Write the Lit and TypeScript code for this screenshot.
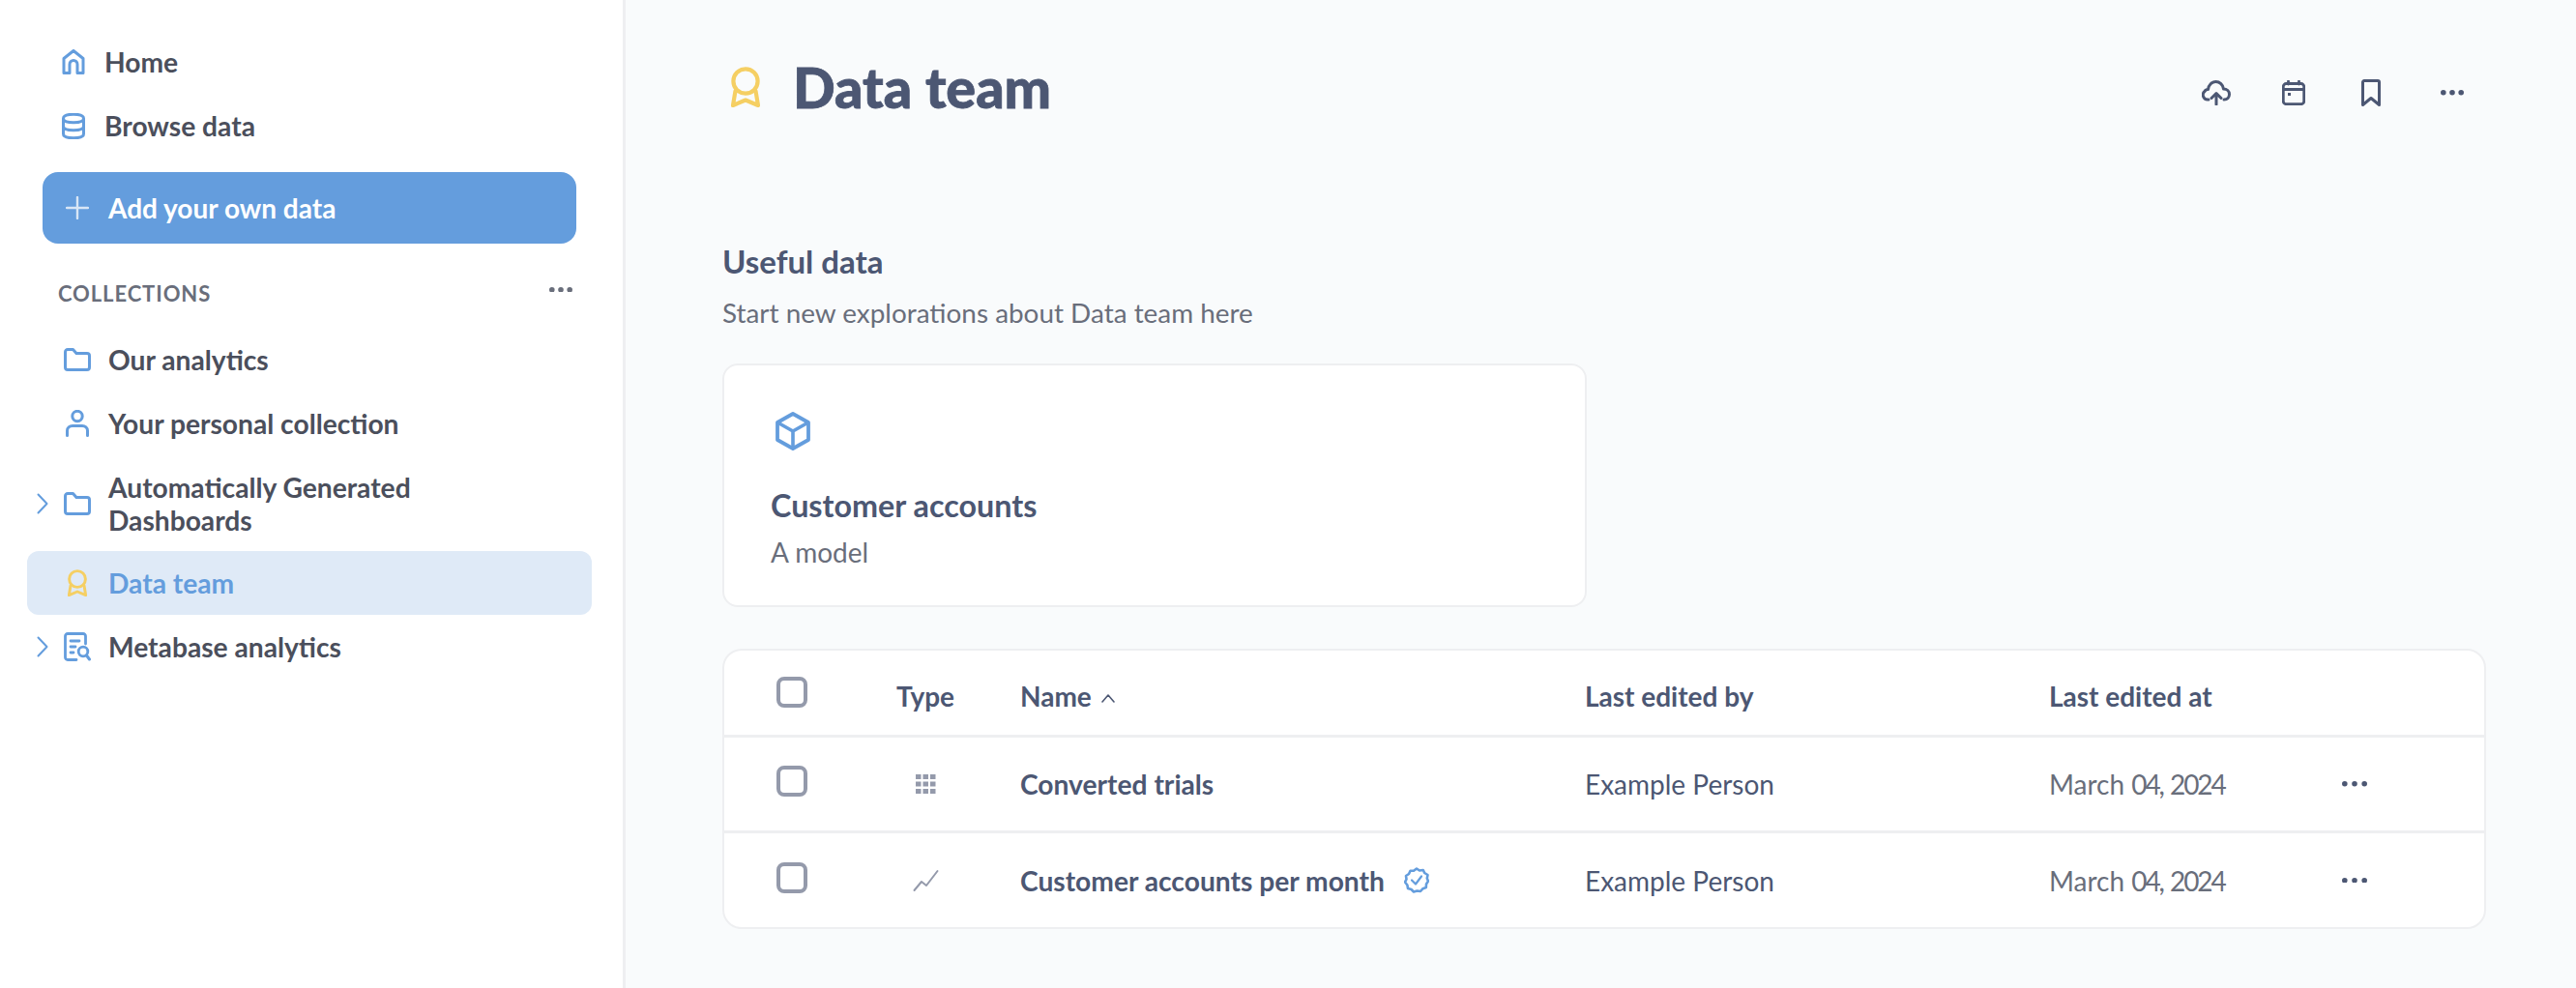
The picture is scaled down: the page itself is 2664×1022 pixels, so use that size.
import { LitElement, html, css, svg } from "lit";
import { customElement } from "lit/decorators.js";

const ic = (w: number, h: number, vb: string, body: unknown, cls = "") =>
  html`<svg class=${cls} width=${w} height=${h} viewBox=${vb} fill="none" stroke="currentColor" stroke-linecap="round" stroke-linejoin="round">${body}</svg>`;

const home = () => ic(24, 26, "0 0 24 26", svg`<path d="M2 24.5V9.5L12 1.5L22 9.5V24.5H16V15.5A4 4 0 0 0 8 15.5V24.5Z" stroke-width="3"/>`);
const db = () => ic(24, 27, "0 0 24 27", svg`<path d="M1.5 5.5C1.5 2.5 6 1.2 12 1.2S22.5 2.5 22.5 5.5V21.5C22.5 24.5 18 25.8 12 25.8S1.5 24.5 1.5 21.5ZM1.5 5.5C1.5 8.500 6 9.8 12 9.8S22.5 8.5 22.5 5.5M1.5 13.5C1.5 16.5 6 17.8 12 17.8S22.5 16.5 22.5 13.5" stroke-width="3"/>`);
const folder = () => ic(28, 24, "0 0 28 24", svg`<path d="M1.5 4A2.5 2.5 0 0 1 4 1.5H9.5L13 5.5H24A2.5 2.5 0 0 1 26.5 8V20A2.5 2.5 0 0 1 24 22.5H4A2.5 2.5 0 0 1 1.5 20Z" stroke-width="3"/>`);
const person = () => ic(24, 28, "0 0 24 28", svg`<circle cx="12" cy="6.5" r="5.2" stroke-width="3"/><path d="M1.5 26.500V21.5C1.5 18.5 4 16.5 7 16.5H17C20 16.5 22.5 18.5 22.5 21.5V26.5" stroke-width="3"/>`);
const badge = (w: number, h: number, sw: number) => ic(w, h, "0 0 30 42", svg`<circle cx="15" cy="15" r="12.6" stroke-width=${sw}/><path d="M4.500 25L2 40L15 34.500L28 40L25.500 25" stroke-width=${sw}/>`);
const chev = () => ic(12, 22, "0 0 12 22", svg`<path d="M1.5 1.5L10.5 11L1.5 20.5" stroke-width="2"/>`);
const report = () => ic(28, 30, "0 0 28 30", svg`<path d="M22.5 12V4A2.5 2.5 0 0 0 20 1.5H4A2.5 2.5 0 0 0 1.5 4V26A2.5 2.5 0 0 0 4 28.5H13" stroke-width="2.8"/><path d="M7 9H16M7 15H12M7 21H10" stroke-width="2.800"/><circle cx="20" cy="20" r="4.800" stroke-width="2.800"/><path d="M23.5 24L26.5 28" stroke-width="3"/>`);
const dots = (r: number, gap: number) => html`<svg width=${gap * 2 + r * 2} height=${r * 2} viewBox="0 0 ${gap * 2 + r * 2} ${r * 2}" fill="currentColor"><circle cx=${r} cy=${r} r=${r}/><circle cx=${r + gap} cy=${r} r=${r}/><circle cx=${r + gap * 2} cy=${r} r=${r}/></svg>`;
const cloud = () => ic(30, 26, "0 0 30 26", svg`<path d="M7 20H6A4.800 4.800 0 0 1 3 11.500C3.500 10.500 5 9.500 6.500 9.500C7 5 10.500 1.500 14.500 1.500C18.500 1.500 22 4.500 22.500 9C26 9 28.500 11.500 28.500 14.500C28.500 17.500 26.500 20 23 20" stroke-width="3"/><path d="M15 25V14M10 18.500L15 13.500L20 18.500" stroke-width="3"/>`);
const cal = () => ic(24, 26, "0 0 24 26", svg`<rect x="1.300" y="3.500" width="21.400" height="21.200" rx="3" stroke-width="2.800"/><path d="M6.500 1V4M17.500 1V4M1.500 9.500H22.500" stroke-width="2.800"/><rect x="6" y="13" width="3" height="3" fill="currentColor" stroke="none"/>`);
const bookmark = () => ic(20, 28, "0 0 20 28", svg`<path d="M1.500 26.500V3A1.500 1.500 0 0 1 3 1.500H17A1.500 1.500 0 0 1 18.500 3V26.500L10 19.500Z" stroke-width="3"/>`);
const cube = () => ic(36, 40, "0 0 36 40", svg`<path d="M18 2L34 11V29L18 38L2 29V11Z" stroke-width="3.800"/><path d="M3 11.500L18 20L33 11.500M18 20V37" stroke-width="3.600"/>`);
const grid = () => html`<svg width="21" height="20" viewBox="0 0 21 20" fill="currentColor">${[0, 7.5, 15].flatMap((y) => [0, 7.5, 15].map((x) => svg`<rect x=${x} y=${y} width="5.500" height="5"/>`))}</svg>`;
const line = () => ic(27, 24, "0 0 27 24", svg`<path d="M1.500 22L9 13L14 17L25.500 2" stroke-width="2"/>`);
const verified = () => ic(26, 27, "0 0 26 27", svg`<path d="M13 1.500L16 3.500L19.800 3L21.200 6L24.500 8L23.800 11.500L25 14.500L23 17.500L22.800 21L19.500 22.200L17 25L13.500 24.500L10 25.500L7.500 23L4 22L3.400 18.500L1 15.500L2.500 12.500L2 9L5 7L6.500 3.800L10 3.800Z" stroke-width="2.600"/><path d="M8 13.500L12 17.500L18 9.500" stroke-width="2.200"/>`);

@customElement("app-root")
export class AppRoot extends LitElement {
  static styles = css`
    :host { display: flex; width: 2664px; height: 1022px; overflow: hidden; background: #f9fbfc; font-family: Lato, "Liberation Sans", sans-serif; color: #4c5773; }
    * { box-sizing: border-box; }
    .side { width: 647px; flex: none; height: 100%; background: #fff; border-right: 3px solid #eeeff1; padding: 31px 32px 0 28px; color: #4b4f5c; display: flex; flex-direction: column; }
    .item { display: flex; align-items: center; height: 66px; font-size: 28.2px; font-weight: 700; line-height: 34px; border-radius: 12px; position: relative; flex: none; }
    .item .ico { width: 84px; flex: none; display: flex; justify-content: center; color: #649ddd; padding-left: 20px; }
    .top .ico { width: 80px; justify-content: flex-start; padding-left: 36px; }
    .tall { height: 99px; }
    .active { background: #dfeaf7; color: #649ddd; }
    .active .ico { color: #f5cf63; }
    .chev { position: absolute; left: 10px; top: 50%; transform: translateY(-50%); color: #649ddd; display: flex; }
    .add { margin: 15px 16px 0; height: 74px; flex: none; background: #649ddd; border-radius: 16px; color: #fff; display: flex; align-items: center; font-size: 28px; font-weight: 700; padding-left: 24px; gap: 20px; }
    .plus { opacity: .75; display: flex; }
    .label { display: flex; justify-content: space-between; align-items: center; height: 87px; padding: 15px 20px 0 32px; font-size: 22px; font-weight: 700; letter-spacing: .9px; color: #696e7b; flex: none; }
    .label .d { color: #696e7b; display: flex; margin-top: -7px; }
    .main { flex: 1; padding: 0 93px 0 100px; display: flex; flex-direction: column; min-width: 0; }
    .head { display: flex; height: 180px; flex: none; }
    .tt { display: flex; align-items: center; flex: 1; align-self: flex-start; height: 128px; margin-top: 26px; }
    .tt .b { width: 73px; padding-left: 9px; display: flex; color: #f5cf63; }
    h1 { margin: 0; font-size: 57.5px; font-weight: 900; color: #4c5773; line-height: 72px; -webkit-text-stroke: .8px #4c5773; }
    .acts { display: flex; align-items: center; color: #4c5773; align-self: flex-start; margin: 50px -9px 0 0; height: 92px; }
    .act { width: 80px; display: flex; justify-content: center; }
    .act.last { width: 88px; }
    h2 { margin: 70px 0 0; font-size: 33px; font-weight: 700; line-height: 40px; color: #4c5773; flex: none; }
    .sub { font-size: 27.9px; line-height: 36px; color: #696e7b; margin-top: 15px; flex: none; }
    .card { width: 894px; height: 252px; margin-top: 35px; background: #fff; border: 2px solid #eeeff1; border-radius: 16px; padding: 48px 0 0 48px; flex: none; }
    .card .i { color: #649ddd; display: flex; height: 40px; padding-left: 5px; }
    .card .n { font-size: 32.3px; font-weight: 700; line-height: 38px; margin-top: 38px; color: #4c5773; }
    .card .m { font-size: 28px; line-height: 36px; color: #696e7b; margin-top: 11px; }
    .table { margin-top: 43px; width: 100%; height: 290px; background: #fff; border: 2px solid #eeeff1; border-radius: 20px; flex: none; display: flex; flex-direction: column; }
    .row { display: grid; grid-template-columns: 306px 584px 480px 303px 1fr; align-items: center; height: 100px; border-top: 3px solid #eeeff1; font-size: 28px; }
    .row.h { height: 87px; border-top: 0; font-weight: 700; }
    .row.h > div:not(.c0), .row.h .t { margin-top: 7px; }
    .c0 { display: flex; align-items: center; padding-left: 54px; gap: 92px; }
    .cb { width: 32px; height: 32px; border: 4px solid #949aab; border-radius: 8px; margin-top: -6px; flex: none; }
    .h .cb { margin-top: -1px; }
    .t { width: 60px; display: flex; justify-content: center; color: #949aab; }
    .h .t { color: #4c5773; }
    .nm { font-weight: 700; font-size: 28.2px; display: flex; align-items: center; gap: 20px; }
    .sort { margin-left: 10px; display: inline-flex; vertical-align: 4px; }
    .by { color: #4c5773; }
    .at { color: #696e7b; }
    .num { letter-spacing: -2.1px; }
    .more { color: #4c5773; display: flex; }
    .ver { display: flex; color: #649ddd; }
  `;

  row(icon: unknown, name: unknown) {
    return html`<div class="row">
      <div class="c0"><span class="cb"></span><span class="t">${icon}</span></div>
      <div class="nm">${name}</div>
      <div class="by">Example Person</div>
      <div class="at">March <span class="num">04,</span> <span class="num">2024</span></div>
      <div class="more">${dots(2.8, 10.2)}</div>
    </div>`;
  }

  render() {
    return html`
      <aside class="side">
        <div class="item top"><span class="ico">${home()}</span>Home</div>
        <div class="item top"><span class="ico">${db()}</span>Browse data</div>
        <div class="add"><span class="plus">${ic(24, 24, "0 0 24 24", svg`<path d="M12 1V23M1 12H23" stroke-width="2.400"/>`)}</span>Add your own data</div>
        <div class="label">COLLECTIONS<span class="d">${dots(2.8, 9.2)}</span></div>
        <div class="item"><span class="ico">${folder()}</span>Our analytics</div>
        <div class="item"><span class="ico">${person()}</span>Your personal collection</div>
        <div class="item tall"><span class="chev">${chev()}</span><span class="ico">${folder()}</span><span>Automatically Generated<br />Dashboards</span></div>
        <div class="item active"><span class="ico">${badge(20, 28, 4.4)}</span>Data team</div>
        <div class="item"><span class="chev">${chev()}</span><span class="ico">${report()}</span>Metabase analytics</div>
      </aside>
      <main class="main">
        <header class="head">
          <div class="tt"><span class="b">${badge(30, 42, 4.2)}</span><h1>Data team</h1></div>
          <div class="acts">
            <span class="act">${cloud()}</span><span class="act">${cal()}</span><span class="act">${bookmark()}</span><span class="act last">${dots(2.8, 9.2)}</span>
          </div>
        </header>
        <h2>Useful data</h2>
        <div class="sub">Start new explorations about Data team here</div>
        <section class="card">
          <div class="i">${cube()}</div>
          <div class="n">Customer accounts</div>
          <div class="m">A model</div>
        </section>
        <section class="table">
          <div class="row h">
            <div class="c0"><span class="cb"></span><span class="t">Type</span></div>
            <div>Name<span class="sort">${ic(14, 9, "0 0 14 9", svg`<path d="M1 8L7 1L13 8" stroke-width="1.600"/>`)}</span></div>
            <div>Last edited by</div>
            <div>Last edited at</div>
            <div></div>
          </div>
          ${this.row(grid(), "Converted trials")}
          ${this.row(line(), html`Customer accounts per month <span class="ver">${verified()}</span>`)}
        </section>
      </main>`;
  }
}
